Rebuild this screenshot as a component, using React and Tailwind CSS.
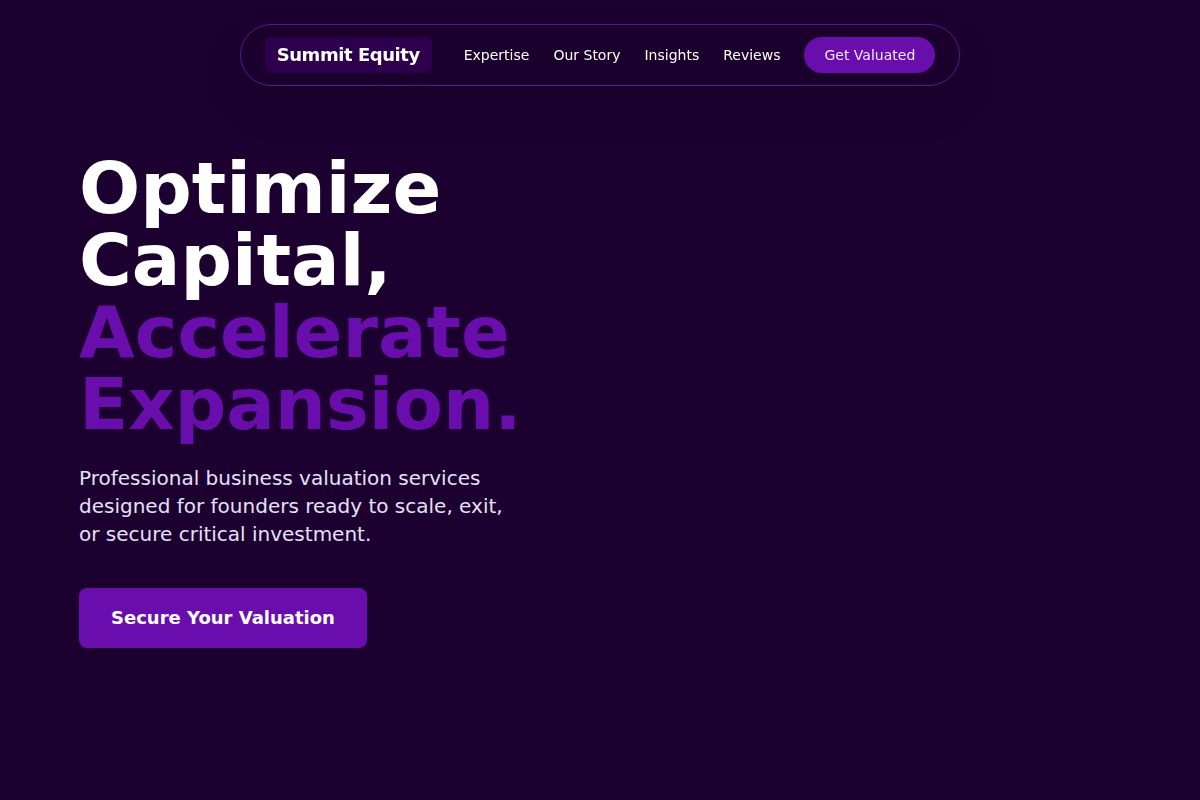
import React from 'react';

const navLinks = [
  { label: 'Expertise', href: '#expertise' },
  { label: 'Our Story', href: '#story' },
  { label: 'Insights', href: '#insights' },
  { label: 'Reviews', href: '#reviews' },
];

function Navbar() {
  return (
    <header className="fixed inset-x-0 top-6 z-10 flex justify-center px-4">
      <nav className="flex items-center gap-8 rounded-full border border-[#5a1590] bg-[#1b002e] px-6 py-3 shadow-[0_20px_40px_rgba(0,0,0,0.12)]">
        <a href="#home" className="rounded-md bg-[#2d004d] px-3 py-1 text-lg font-bold tracking-tight whitespace-nowrap">
          Summit Equity
        </a>
        <div className="flex items-center gap-6 text-sm whitespace-nowrap">
          {navLinks.map((link) => (
            <a key={link.label} href={link.href} className="hover:text-purple-300">
              {link.label}
            </a>
          ))}
          <button type="button" className="rounded-full bg-[#6a0dad] px-5 py-2 text-purple-100 hover:bg-[#7b1fc0]">
            Get Valuated
          </button>
        </div>
      </nav>
    </header>
  );
}

function Hero() {
  return (
    <main className="flex min-h-screen items-center px-[79px]">
      <section className="max-w-md">
        <h1 className="mb-6 text-7xl leading-none font-bold">
          Optimize Capital,
          <span className="block text-[#6a0dad]">Accelerate Expansion.</span>
        </h1>
        <p className="mb-10 text-xl leading-7 text-[#e6e0fa]">
          Professional business valuation services designed for founders ready to scale, exit, or secure critical
          investment.
        </p>
        <button type="button" className="rounded-lg bg-[#6a0dad] px-8 py-4 text-lg font-bold hover:bg-[#7b1fc0]">
          Secure Your Valuation
        </button>
      </section>
    </main>
  );
}

function App() {
  return (
    <div id="home" className="min-h-screen bg-[#1c0030] font-['DejaVu_Sans',sans-serif] text-white">
      <Navbar />
      <Hero />
    </div>
  );
}

export default App;
